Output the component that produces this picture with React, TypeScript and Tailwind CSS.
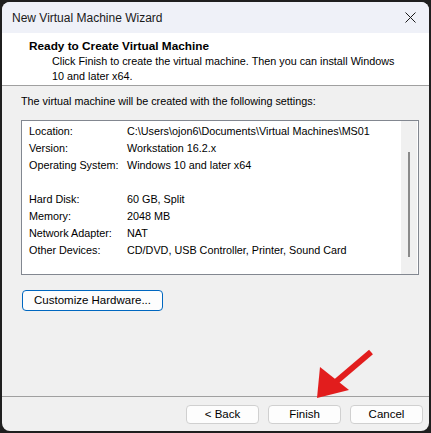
import React from 'react';

const SETTINGS: [string, string][] = [
  ['Location:', 'C:\\Users\\ojon6\\Documents\\Virtual Machines\\MS01'],
  ['Version:', 'Workstation 16.2.x'],
  ['Operating System:', 'Windows 10 and later x64'],
  ['', ''],
  ['Hard Disk:', '60 GB, Split'],
  ['Memory:', '2048 MB'],
  ['Network Adapter:', 'NAT'],
  ['Other Devices:', 'CD/DVD, USB Controller, Printer, Sound Card'],
];

function Btn({ children }: { children: React.ReactNode }) {
  return (
    <button className="flex h-[19px] w-[73px] items-center justify-center rounded-[4px] border border-[#d0d0d0] bg-[#fdfdfd] text-[11.5px] text-black">
      {children}
    </button>
  );
}

export default function App() {
  return (
    <div className="relative h-[433px] w-[431px] bg-[#1f1f1f] p-[2px] font-['Liberation_Sans',Arial,sans-serif]">
      <div className="flex h-full w-full flex-col overflow-hidden rounded-[8px] bg-[#f0f0f0]">
        {/* title bar */}
        <div className="flex h-[31px] shrink-0 items-center justify-between bg-[#eff1f8] pl-[10px] pr-[12px]">
          <span className="text-[12px] text-[#1a1a1a]">New Virtual Machine Wizard</span>
          <svg width="11" height="11" viewBox="0 0 11 11" className="mr-[1px]">
            <path d="M0.5 0.5 L10.5 10.5 M10.5 0.5 L0.5 10.5" stroke="#1a1a1a" strokeWidth="1" />
          </svg>
        </div>

        {/* header */}
        <div className="h-[53px] shrink-0 border-b border-[#a0a0a0] bg-white pl-[27px] pt-[5px]">
          <div className="text-[11.8px] font-bold leading-[16px] text-black">Ready to Create Virtual Machine</div>
          <div className="w-[370px] pl-[23px] text-[10.8px] leading-[15px] text-black">
            Click Finish to create the virtual machine. Then you can install Windows 10 and later x64.
          </div>
        </div>

        {/* body */}
        <div className="flex flex-1 flex-col border-b border-[#a0a0a0] pl-[19px] pr-[10px] pt-[7px]">
          <div className="whitespace-nowrap text-[10.8px] leading-[16px] text-black">
            The virtual machine will be created with the following settings:
          </div>
          <div className="mt-[11px] flex h-[155px] border border-[#828790] bg-white">
            <div className="flex-1 pl-[7px] pt-[2px]">
              {SETTINGS.map(([k, v], i) => (
                <div key={i} className="flex h-[17px] items-center whitespace-nowrap text-[10.8px] text-black">
                  <span className="w-[98px] shrink-0">{k}</span>
                  <span>{v}</span>
                </div>
              ))}
            </div>
            <div className="mr-[1px] flex w-[16px] justify-center bg-[#f0f0f0] pt-[31px]">
              <div className="h-[105px] w-[2px] bg-[#8a8a8a]" />
            </div>
          </div>
          <button className="ml-[1px] mt-[15px] flex h-[21px] w-[141px] items-center justify-center rounded-[4px] border border-[#0067c0] bg-[#fdfdfd] text-[11.5px] text-black">
            Customize Hardware...
          </button>
        </div>

        {/* footer */}
        <div className="flex h-[34px] shrink-0 justify-end gap-[9px] pr-[6px] pt-[8px]">
          <Btn>&lt; Back</Btn>
          <Btn>Finish</Btn>
          <Btn>Cancel</Btn>
        </div>
      </div>

      {/* red arrow annotation */}
      <svg className="pointer-events-none absolute left-0 top-0" width="431" height="433">
        <line x1="371" y1="352" x2="331" y2="386" stroke="#e21d1d" strokeWidth="6" />
        <polygon points="317,398 320,367 349,390" fill="#e21d1d" />
      </svg>
    </div>
  );
}
